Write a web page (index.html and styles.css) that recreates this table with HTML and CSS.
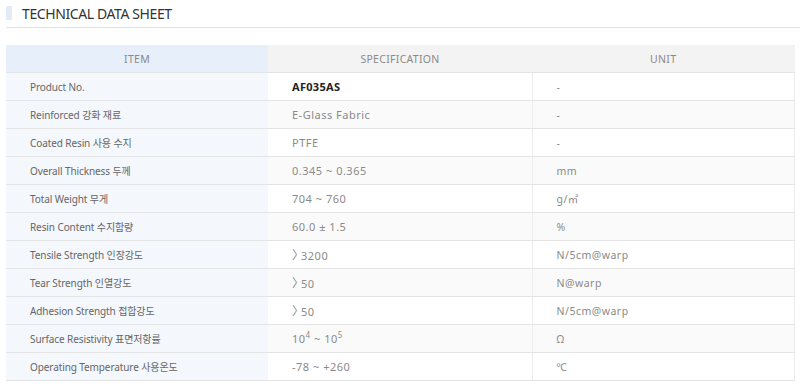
FILE: index.html
```html
<!DOCTYPE html>
<html lang="ko">
<head>
<meta charset="utf-8">
<link rel="stylesheet" href="styles.css">
</head>
<body>
<div class="page">
  <h2 class="title"><span class="mark"></span>TECHNICAL DATA SHEET</h2>
  <table class="tds">
    <thead>
      <tr><th class="c-item">ITEM</th><th class="c-spec">SPECIFICATION</th><th class="c-unit">UNIT</th></tr>
    </thead>
    <tbody>
      <tr><td class="c-item">Product No.</td><td class="c-spec strong">AF035AS</td><td class="c-unit">-</td></tr>
      <tr class="alt"><td class="c-item">Reinforced 강화 재료</td><td class="c-spec">E-Glass Fabric</td><td class="c-unit">-</td></tr>
      <tr><td class="c-item">Coated Resin 사용 수지</td><td class="c-spec">PTFE</td><td class="c-unit">-</td></tr>
      <tr class="alt"><td class="c-item">Overall Thickness 두께</td><td class="c-spec">0.345 ~ 0.365</td><td class="c-unit">mm</td></tr>
      <tr><td class="c-item">Total Weight 무게</td><td class="c-spec">704 ~ 760</td><td class="c-unit">g/㎡</td></tr>
      <tr class="alt"><td class="c-item">Resin Content 수지함량</td><td class="c-spec">60.0 ± 1.5</td><td class="c-unit">%</td></tr>
      <tr><td class="c-item">Tensile Strength 인장강도</td><td class="c-spec"><span class="gt">〉</span>3200</td><td class="c-unit">N/5cm@warp</td></tr>
      <tr class="alt"><td class="c-item">Tear Strength 인열강도</td><td class="c-spec"><span class="gt">〉</span>50</td><td class="c-unit">N@warp</td></tr>
      <tr><td class="c-item">Adhesion Strength 접합강도</td><td class="c-spec"><span class="gt">〉</span>50</td><td class="c-unit">N/5cm@warp</td></tr>
      <tr class="alt"><td class="c-item">Surface Resistivity 표면저항률</td><td class="c-spec">10<sup>4</sup> ~ 10<sup>5</sup></td><td class="c-unit">Ω</td></tr>
      <tr><td class="c-item">Operating Temperature 사용온도</td><td class="c-spec">-78 ~ +260</td><td class="c-unit">℃</td></tr>
    </tbody>
  </table>
</div>
</body>
</html>
```
FILE: styles.css
```css
html, body {
  margin: 0;
  padding: 0;
  background: #fff;
}
.page {
  padding: 0 0 0 6px;
  font-family: "Noto Sans", "Noto Sans CJK KR", sans-serif;
}
.title {
  display: flex;
  align-items: center;
  gap: 10px;
  margin: 0;
  height: 26px;
  font-size: 14px;
  font-weight: 400;
  color: #333;
  letter-spacing: -0.4px;
  border-bottom: 1px solid #e2e2e2;
  padding-bottom: 1px;
}
.mark {
  display: block;
  width: 6px;
  height: 14px;
  background: #e3ebf7;
  margin-top: -1px;
}
.tds {
  margin-top: 17px;
  width: 789px;
  border-collapse: collapse;
  table-layout: fixed;
  font-size: 11px;
}
.tds th, .tds td {
  height: 27px;
  padding: 0 0 0 24px;
  border-bottom: 1px solid #e4e4e4;
  text-align: left;
  font-weight: 400;
  white-space: nowrap;
}
.tds th {
  text-align: center;
  padding: 0;
  color: #8a8a8a;
  font-size: 10.5px;
  letter-spacing: 0.3px;
}
.tds th.c-item { background: #e7effa; width: 262px; }
.tds th.c-spec { background: #f3f3f3; width: 264px; }
.tds th.c-unit { background: #f3f3f3; }
.tds td.c-item {
  background: #f4f7fc;
  color: #666;
  font-size: 10px;
  letter-spacing: -0.1px;
}
.tds td.c-spec {
  color: #8a8a8a;
  font-size: 11px;
  letter-spacing: 0.5px;
  border-right: 1px solid #ececec;
}
.tds td.c-unit {
  color: #8a8a8a;
  font-size: 10.5px;
  letter-spacing: 0.5px;
  border-right: 1px solid #ececec;
}
.tds tr.alt td.c-spec, .tds tr.alt td.c-unit {
  background: #fafafa;
}
.tds td.strong {
  color: #222;
  font-weight: 700;
  letter-spacing: 0.3px;
}
.gt {
  font-size: 12px;
  letter-spacing: -3px;
}
.tds sup {
  font-size: 8px;
  line-height: 0;
  vertical-align: 5px;
}
```
